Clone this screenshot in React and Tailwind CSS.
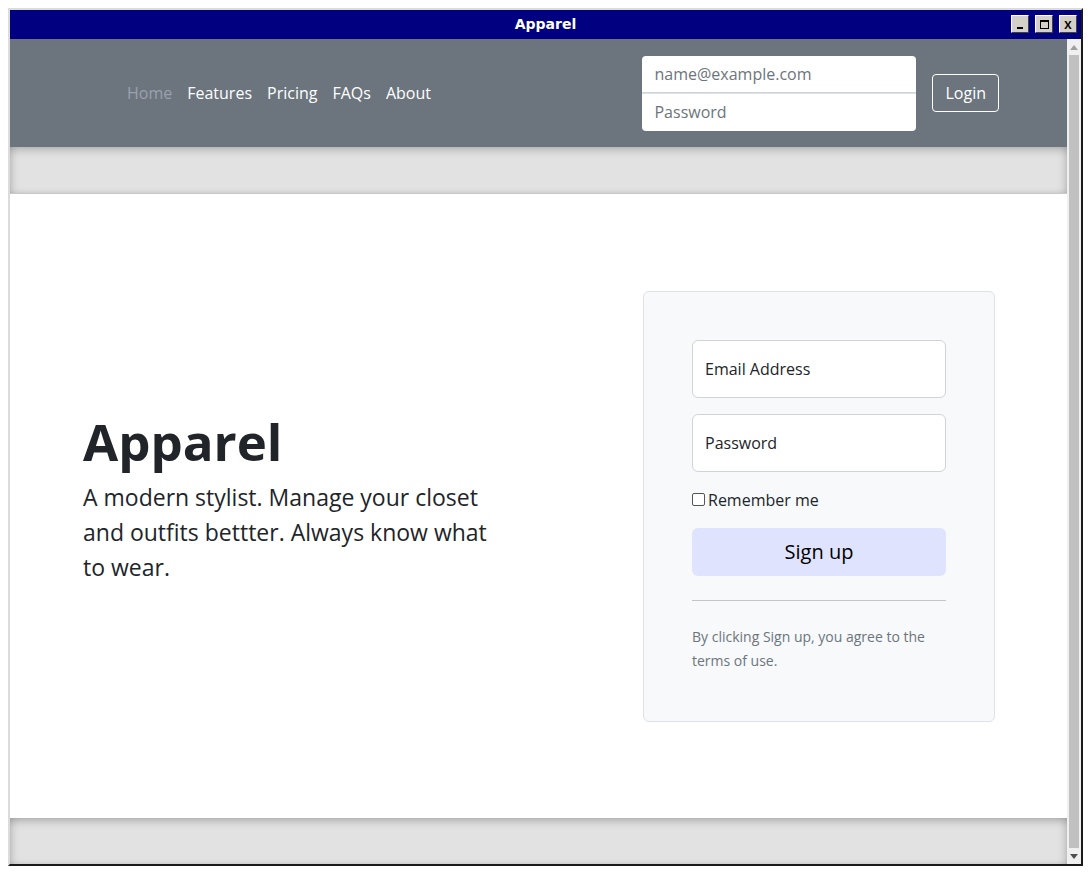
const font = { fontFamily: '"Open Sans", "Noto Sans", sans-serif' }

const navLinks = ['Home', 'Features', 'Pricing', 'FAQs', 'About']

function TitleButton({ children }) {
    return (
        <div className="w-[18px] h-[18px] bg-[#d4d0c8] border border-t-white border-l-white border-r-[#404040] border-b-[#404040] flex items-center justify-center text-[11px] leading-none text-black font-bold">
            {children}
        </div>
    )
}

export default function App() {
    return (
        <div className="w-[1092px] h-[874px] bg-white pt-2 pl-2" style={font}>
            <div className="w-[1075px] h-[858px] flex flex-col border-2 border-t-[#dcdcdc] border-l-[#dcdcdc] border-r-[#1a1a1a] border-b-[#1a1a1a]">
                {/* title bar */}
                <div className="h-[29px] bg-[#000080] flex items-center relative shrink-0">
                    <p className="flex-1 text-center text-white text-[14px] font-bold" style={{ fontFamily: '"DejaVu Sans", sans-serif' }}>Apparel</p>
                    <div className="absolute right-[4px] top-[5px] flex gap-[6px]">
                        <TitleButton><span className="block w-[6px] h-[2px] bg-black mt-[8px]"></span></TitleButton>
                        <TitleButton><span className="block w-[9px] h-[9px] border border-black border-t-2"></span></TitleButton>
                        <TitleButton>X</TitleButton>
                    </div>
                </div>

                <div className="flex flex-1 min-h-0">
                    <div className="flex-1 flex flex-col">
                        {/* navbar */}
                        <nav className="h-[108px] bg-[#6c757d] flex items-center pl-[109.5px] shrink-0">
                            <ul className="flex text-[16px]">
                                {navLinks.map((l, i) => (
                                    <li key={l} className={`px-[7.5px] ${i === 0 ? 'text-[#9aa1ad]' : 'text-white'}`}>{l}</li>
                                ))}
                            </ul>
                            <div className="ml-auto flex items-center mr-[68px]">
                                <div className="flex flex-col w-[274px]">
                                    <div className="h-[37px] bg-white rounded-t-[4px] border-b border-[#ced4da] px-3 flex items-center text-[16px] text-[#6c757d]">name@example.com</div>
                                    <div className="h-[38px] bg-white rounded-b-[4px] px-3 flex items-center text-[16px] text-[#6c757d] border-t border-[#dee2e6]">Password</div>
                                </div>
                                <button className="ml-4 h-[38px] px-3 border border-white rounded-[4px] text-white text-[16px]">Login</button>
                            </div>
                        </nav>

                        <div className="h-[47px] bg-[#e2e2e2] shadow-[inset_0_7px_8px_-4px_rgba(0,0,0,0.22),inset_8px_0_8px_-6px_rgba(0,0,0,0.15),inset_-8px_0_8px_-6px_rgba(0,0,0,0.15),inset_0_-4px_6px_-4px_rgba(0,0,0,0.12)] border-b border-[#c8c8c8] shrink-0"></div>

                        {/* hero */}
                        <section className="flex-1 bg-white flex items-center pl-[73px] pr-[72px]">
                            <div className="flex-1 text-[#212529] pb-[16px]">
                                <h1 className="text-[51px] font-bold leading-[1.2] mb-[8px]">Apparel</h1>
                                <p className="text-[23px] leading-[35px] w-[415px]">A modern stylist. Manage your closet and outfits bettter. Always know what to wear.</p>
                            </div>
                            <div className="w-[352px] h-[431px] bg-[#f8f9fa] border border-[#dee2e6] rounded-[6px] px-[48px] pt-[48px]">
                                <div className="h-[58px] bg-white border border-[#ced4da] rounded-[6px] px-3 flex items-center text-[16px] text-[#212529]">Email Address</div>
                                <div className="h-[58px] mt-4 bg-white border border-[#ced4da] rounded-[6px] px-3 flex items-center text-[16px] text-[#212529]">Password</div>
                                <label className="flex items-center mt-4 text-[16px] text-[#212529] gap-[3px]">
                                    <span className="w-[13px] h-[13px] border border-[#555] rounded-[2px] bg-white"></span>
                                    Remember me
                                </label>
                                <button className="mt-4 w-full h-[48px] bg-[#dfe3fd] rounded-[6px] text-[20px] text-black">Sign up</button>
                                <hr className="mt-6 border-t border-[#c4c6c9]" />
                                <p className="mt-6 text-[14px] leading-[24px] text-[#6c757d]">By clicking Sign up, you agree to the terms of use.</p>
                            </div>
                        </section>

                        <div className="h-[46px] bg-[#e2e2e2] shadow-[inset_0_7px_8px_-4px_rgba(0,0,0,0.24),inset_8px_0_8px_-6px_rgba(0,0,0,0.15),inset_-8px_0_8px_-6px_rgba(0,0,0,0.15),inset_0_-4px_6px_-4px_rgba(0,0,0,0.12)] shrink-0"></div>
                    </div>

                    {/* scrollbar */}
                    <div className="w-[14px] bg-[#f0f0f0] flex flex-col items-center">
                        <div className="h-[16px] flex items-center justify-center">
                            <span className="block w-0 h-0 border-l-[4px] border-r-[4px] border-b-[5px] border-l-transparent border-r-transparent border-b-[#a0a0a0]"></span>
                        </div>
                        <div className="flex-1 w-[10px] bg-[#c1c1c1]"></div>
                        <div className="h-[16px] flex items-center justify-center">
                            <span className="block w-0 h-0 border-l-[4px] border-r-[4px] border-t-[5px] border-l-transparent border-r-transparent border-t-[#505050]"></span>
                        </div>
                    </div>
                </div>
            </div>
        </div>
    )
}
